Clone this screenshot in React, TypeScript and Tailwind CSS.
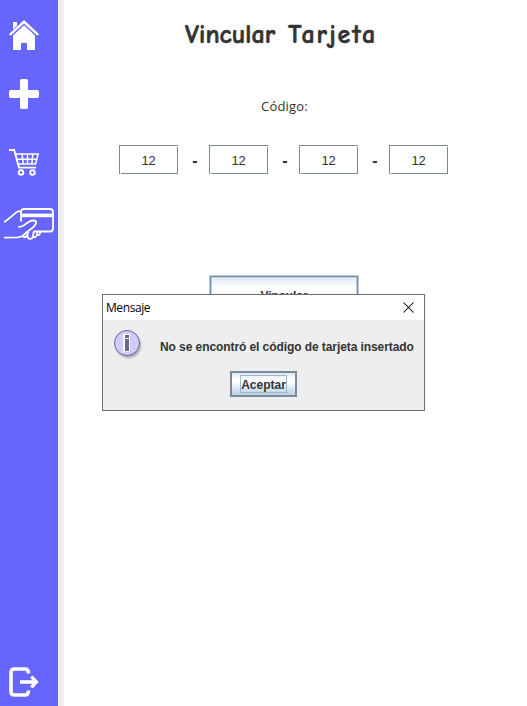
import React from "react";

function HomeIcon() {
  return (
    <svg width="30" height="30" viewBox="0 0 30 30" fill="#fff">
      <path d="M4 2h4v3.5l-4 4z" />
      <path d="M15 0L30 14L28.4 15.8L15 3.4L1.6 15.8L0 14Z" />
      <path d="M15 5.2L26 15.5V30H18V23H12V30H4V15.5Z" />
    </svg>
  );
}

function PlusIcon() {
  return (
    <svg width="30" height="30" viewBox="0 0 30 30" fill="#fff">
      <rect x="11" y="0" width="8" height="30" rx="1.7" />
      <rect x="0" y="11" width="30" height="8" rx="1.7" />
    </svg>
  );
}

function CartIcon() {
  return (
    <svg width="30" height="27" viewBox="0 0 30 27" fill="none" stroke="#fff" strokeWidth="1.5">
      <path d="M0 1h5.2L10 18.6h17" strokeWidth="1.9" />
      <path d="M6 5h23.2L26.5 15H9M7.5 10.2h20.5M13 5l1.3 10M18.5 5v10M23.8 5l-1 10" />
      <circle cx="12" cy="23.5" r="2.3" strokeWidth="1.9" />
      <circle cx="23.5" cy="23.5" r="2.3" strokeWidth="1.9" />
    </svg>
  );
}

function CardHandIcon() {
  return (
    <svg width="51" height="32" viewBox="0 0 51 32" fill="none" stroke="#fff" strokeWidth="1.8" strokeLinecap="round" strokeLinejoin="round">
      <path d="M17 12.8V4q0-3 3-3h26q3 0 3 3v16.5q0 3-3 3H30.5" />
      <path d="M17 7.4h32" strokeWidth="3.6" strokeLinecap="butt" />
      <path d="M.8 13.8Q7 9 12 4.6q2-1.8 4.7-1.2" />
      <path d="M15 18.8q3 .2 6.5-2.7c4-3.2 7-4.3 9.8-3.3 1.5.7.7 3-.6 4.7-2.6 3.8-7 5.2-9.7 8.3q-2.5 3.2-7.5 3.6L.8 29.6" />
      <path d="M19 28.4c1.3 1.6 3.4.6 4-1l1-3M23.7 27.2c-.8 4.8 5 4.6 5.4.8l.5-4M29 29c3 1.2 4.2-1.6 4.4-5M33.2 27.2c2.2.2 3-1.8 3.2-3.6" />
    </svg>
  );
}

function ExitIcon() {
  return (
    <svg width="30" height="30" viewBox="0 0 30 30" fill="none" stroke="#fff">
      <path d="M19.4 6.6V5.5Q19 2 16 2H5.5Q2 2 2 5.5v19Q2 28 5.5 28H16q3 0 3.4-3.5V23.4" strokeWidth="3.6" />
      <path d="M11 15h14" strokeWidth="3.6" />
      <path d="M22.3 9.6L27.4 15L22.3 20.4" strokeWidth="3.4" />
    </svg>
  );
}

function InfoIcon() {
  return (
    <svg width="32" height="32" viewBox="0 0 32 32">
      <defs>
        <filter id="soft" x="-20%" y="-20%" width="140%" height="140%">
          <feGaussianBlur stdDeviation="1.3" />
        </filter>
      </defs>
      <circle cx="15.5" cy="15.5" r="12.5" fill="#aaa" filter="url(#soft)" />
      <circle cx="14" cy="13" r="12.5" fill="#ccccff" stroke="#666699" />
      <path d="M10 4h7v5h-7zM10 8h7v14h-7z" fill="#fff" />
      <path d="M12 5h4v3h-4zM12 9h4v12h-4z" fill="#666699" />
    </svg>
  );
}

function CodeField() {
  return (
    <div className="relative flex h-[29px] w-[59px] items-center justify-center border border-[#7a8a99] bg-white pt-[2px] text-[13px] tracking-[-0.3px] text-[#333]">
      12
      <span className="absolute -right-px top-0 size-px bg-white" />
      <span className="absolute -bottom-px left-0 size-px bg-white" />
    </div>
  );
}

function Dash() {
  return <span className="w-[31px] pl-[3px] pt-[2px] text-center text-[16px] font-bold text-[#333]">-</span>;
}

const metal = "bg-[linear-gradient(#dde8f3_0%,#ffffff_30%,#ffffff_40%,#b8cfe5_100%)]";

function MessageDialog() {
  return (
    <div className="absolute left-[102px] top-[294px] flex h-[117px] w-[323px] flex-col border border-[#6e6e6e] bg-[#eee]">
      <div className="flex h-[25px] items-center justify-between bg-white pl-[3px] pr-[10px] text-black">
        <span className="font-['Open_Sans',sans-serif] text-[12px] tracking-[-0.42px]">Mensaje</span>
        <svg width="11" height="11" viewBox="0 0 11 11" stroke="#000" strokeWidth="1.05">
          <path d="M.5 .5l10 10M10.5 .5l-10 10" />
        </svg>
      </div>
      <div className="flex h-[51px] pl-[10px] pt-[10px]">
        <InfoIcon />
        <span className="ml-[15px] mt-[9px] whitespace-nowrap text-[12px] font-bold leading-4 tracking-[-0.08px] text-[#333]">
          No se encontró el código de tarjeta insertado
        </span>
      </div>
      <button className={"ml-[127px] flex h-[26px] w-[67px] items-center justify-center border-2 border-[#7a8a99] " + metal}>
        <span className="flex h-[18px] w-[47px] items-center justify-center border border-[#a3b8cc] pt-px text-[12px] font-bold text-[#333]">
          Aceptar
        </span>
      </button>
    </div>
  );
}

export default function App() {
  return (
    <div className="relative flex h-[706px] w-[527px] overflow-hidden bg-white font-['Liberation_Sans',sans-serif]">
      <nav className="flex w-[64px] shrink-0 flex-col border-r-[6px] border-[#eee] bg-[#6666ff] pt-[20px] pb-[9px]">
        <div className="ml-[9px]"><HomeIcon /></div>
        <div className="ml-[9px] mt-[29px]"><PlusIcon /></div>
        <div className="ml-[9px] mt-[40px]"><CartIcon /></div>
        <div className="ml-[4px] mt-[32px]"><CardHandIcon /></div>
        <div className="ml-[9px] mt-auto"><ExitIcon /></div>
      </nav>
      <main className="flex flex-1 flex-col">
        <h1 className="ml-[121px] mt-[17px] flex h-[36px] items-center gap-[12px] whitespace-nowrap font-['Comic_Sans_MS','Comic_Neue','Open_Sans',sans-serif] text-[26px] font-bold text-[#333] [-webkit-text-stroke:0.6px_#333]">
          <span className="w-[91px] tracking-[0.05px]">Vincular</span>
          <span className="tracking-[1.9px]">Tarjeta</span>
        </h1>
        <p className="ml-[197px] mt-[43px] h-[20px] font-['Open_Sans',sans-serif] text-[13px] leading-5 tracking-[0.2px] text-[#333]">Código:</p>
        <div className="ml-[55px] mt-[29px] flex items-center">
          <CodeField /><Dash /><CodeField /><Dash /><CodeField /><Dash /><CodeField />
        </div>
        <button className="ml-[145px] mt-[101px] h-[40px] w-[150px] border border-[#b8cfe5] text-[12px] font-bold text-[#333]">
          <span className={"flex size-full items-center justify-center border border-[#7a8a99] pt-px shadow-[inset_0_0_0_1px_#b8cfe5] " + metal}>
            Vincular
          </span>
        </button>
      </main>
      <MessageDialog />
    </div>
  );
}
